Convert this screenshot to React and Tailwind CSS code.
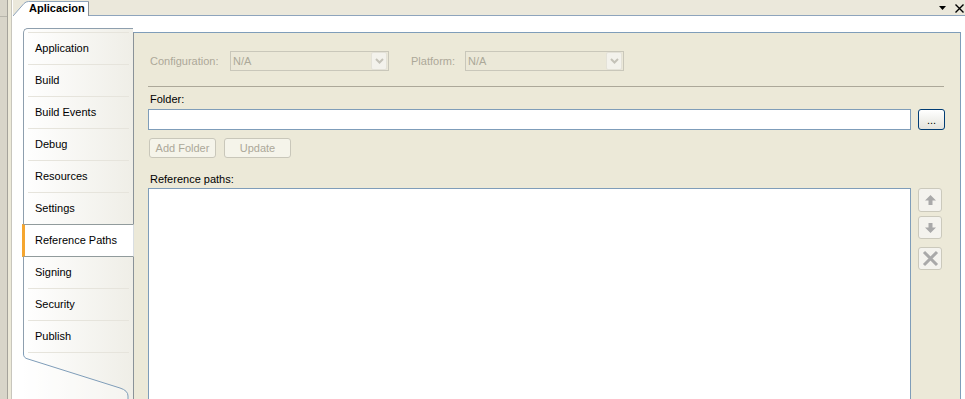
import React from "react";

const items = [
  "Application",
  "Build",
  "Build Events",
  "Debug",
  "Resources",
  "Settings",
  "Reference Paths",
  "Signing",
  "Security",
  "Publish",
];

function Chevron() {
  return (
    <svg width="9" height="6" viewBox="0 0 9 6">
      <path d="M1 1 L4.5 4.5 L8 1" fill="none" stroke="#c4c2b8" strokeWidth="2" />
    </svg>
  );
}

function Dropdown({ w }) {
  return (
    <div className={`${w} h-[20px] border border-[#c9c7ba] bg-[#ebe8d8] flex items-center justify-between pl-[2px] pr-[1px]`}>
      <span className="text-[#aca899]">N/A</span>
      <div className="w-[16px] h-[18px] bg-[#f3f2ec] border border-[#e4e2d8] rounded-[2px] flex items-center justify-center">
        <Chevron />
      </div>
    </div>
  );
}

function SmallBtn({ children, h = "h-[23px]", extra = "" }) {
  return (
    <div className={`w-[24px] ${h} ${extra} border border-[#cbc9bc] rounded-[3px] bg-[#f4f3ee] flex items-center justify-center`}>
      {children}
    </div>
  );
}

export default function App() {
  return (
    <div
      className="w-[965px] h-[399px] overflow-hidden flex bg-white text-[11px] leading-[13px] text-black"
      style={{ fontFamily: '"Liberation Sans", Arial, sans-serif' }}
    >
      {/* left strip */}
      <div className="w-[13px] h-full flex shrink-0">
        <div className="w-[8px] h-full bg-[#d8d5c9] border-r border-[#a5a39b] flex flex-col">
          <div className="h-[17px] border-b border-[#b8b6ac]" />
        </div>
        <div className="w-[4px] h-full bg-[#ece9d8] border-r border-[#c8c6bd]" />
      </div>

      {/* main column */}
      <div className="flex-1 flex flex-col min-w-0">
        {/* top bar */}
        <div className="h-[16px] bg-[#ebe8db] border-b border-[#8ea4bc] flex items-start shrink-0">
          <div className="relative w-[77px] h-[16px] shrink-0 z-10">
            <svg className="absolute inset-0" width="77" height="16" viewBox="0 0 77 16">
              <path d="M0 16 L11 3.5 Q13 1.5 15.5 1.5 H75.5 V16 Z" fill="#ffffff" />
              <path d="M0 16 L11 3.5 Q13 1.5 15.5 1.5 H75.5" fill="none" stroke="#8ea4bc" strokeWidth="1" />
              <path d="M75.5 1.5 V16" fill="none" stroke="#8a9096" strokeWidth="1" />
            </svg>
            <span className="relative block pl-[16px] pt-[2px] font-bold leading-[13px]">Aplicacion</span>
          </div>
          <div className="ml-auto flex items-center h-[15px] pr-[1px]">
            <svg width="7" height="4" viewBox="0 0 7 4" className="mt-[1px]">
              <path d="M0 0 H7 L3.5 4 Z" fill="#000" />
            </svg>
            <svg width="9" height="9" viewBox="0 0 9 9" className="ml-[9px] mt-[1px]">
              <path d="M0.5 0.5 L8.5 8.5 M8.5 0.5 L0.5 8.5" stroke="#000" strokeWidth="1.4" />
            </svg>
          </div>
        </div>

        {/* body */}
        <div className="flex-1 flex items-start pl-[10px] pt-[12px] min-h-0">
          {/* sidebar */}
          <div className="relative z-10 w-[110px] h-[400px] shrink-0 flex flex-col bg-gradient-to-r from-white to-[#efeee7]">
            <div className="border-l border-t border-[#8e9fae] rounded-tl-[5px] pt-[3px]">
              <div className="mx-[4px] border-t border-[#e6e4dc]" />
              {items.map((it) =>
                it === "Reference Paths" ? (
                  <div
                    key={it}
                    className="relative -mt-[1px] -ml-[2px] -mr-[1px] h-[33px] bg-white border-y border-[#919b9c] border-l-[3px] border-l-[#f5a630] border-r border-r-[#d9dee2] flex items-center pl-[10px]"
                  >
                    {it}
                  </div>
                ) : (
                  <div key={it} className="h-[32px] px-[4px]">
                    <div className="h-full border-b border-[#e6e4dc] flex items-center pl-[7px]">{it}</div>
                  </div>
                )
              )}
            </div>
            <div className="relative flex-1 -mt-[1px]">
              <svg className="absolute left-0 top-0" width="110" height="60" viewBox="0 0 110 60">
                <path d="M0 6 L0 60 L105 60 L105 44 Q105 38 97 36 L5 7 Q0.5 6 0.5 2 Z" fill="#ffffff" opacity="0.35" />
                <path d="M0.5 0 V2 Q0.5 6 5 7 L97 36 Q105 38.5 105 44 V60" fill="none" stroke="#7f9db9" strokeWidth="1" />
              </svg>
            </div>
          </div>

          {/* content panel */}
          <div className="mt-[4px] w-[828px] h-[420px] shrink-0 bg-[#ece9d8] border-t border-r border-[#7f9db9] border-l border-l-[#8a9298] pl-[14px] pr-[15px] pt-[18px] flex flex-col">
            {/* config row */}
            <div className="flex items-center h-[20px]">
              <div className="w-[82px] pl-[2px] text-[#aca899]">Configuration:</div>
              <Dropdown w="w-[159px]" />
              <div className="w-[76px] pl-[22px] text-[#aca899]">Platform:</div>
              <Dropdown w="w-[159px]" />
            </div>
            <div className="mt-[15px] border-t border-[#aca899] mr-[1px]" />
            <div className="mt-[6px] h-[13px] pl-[2px]">Folder:</div>
            <div className="mt-[3px] flex items-start">
              <div className="w-[763px] h-[21px] bg-white border border-[#7f9db9]" />
              <div className="ml-[7px] w-[27px] h-[21px] border border-[#003c74] rounded-[3px] bg-gradient-to-b from-white to-[#e4e3dc] flex items-center justify-center">
                <span className="leading-[10px] mt-[1px]">...</span>
              </div>
            </div>
            <div className="mt-[8px] ml-[1px] flex gap-[8px]">
              <div className="w-[67px] h-[20px] border border-[#c9c7ba] rounded-[3px] bg-[#f5f4ea] text-[#aca899] flex items-center justify-center">
                Add Folder
              </div>
              <div className="w-[67px] h-[20px] border border-[#c9c7ba] rounded-[3px] bg-[#f5f4ea] text-[#aca899] flex items-center justify-center">
                Update
              </div>
            </div>
            <div className="mt-[15px] h-[13px] pl-[2px]">Reference paths:</div>
            <div className="mt-[2px] flex items-start">
              <div className="w-[763px] h-[240px] bg-white border border-[#7f9db9]" />
              <div className="ml-[7px] flex flex-col">
                <SmallBtn h="h-[24px]">
                  <svg width="11" height="10" viewBox="0 0 11 10">
                    <path d="M5.5 0 L11 5.5 H7.5 V10 H3.5 V5.5 H0 Z" fill="#a9a9a9" />
                  </svg>
                </SmallBtn>
                <SmallBtn extra="mt-[4px]">
                  <svg width="11" height="10" viewBox="0 0 11 10">
                    <path d="M5.5 10 L11 4.5 H7.5 V0 H3.5 V4.5 H0 Z" fill="#a9a9a9" />
                  </svg>
                </SmallBtn>
                <SmallBtn extra="mt-[8px]">
                  <svg width="17" height="17" viewBox="0 0 17 17">
                    <path d="M2 2 L15 15 M15 2 L2 15" stroke="#a9a9a9" strokeWidth="3" />
                  </svg>
                </SmallBtn>
              </div>
            </div>
          </div>
        </div>
      </div>
    </div>
  );
}
